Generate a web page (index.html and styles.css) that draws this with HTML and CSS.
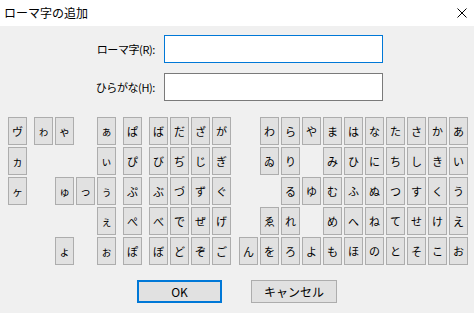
FILE: index.html
```html
<!DOCTYPE html>
<html lang="ja">
<head>
    <meta charset="UTF-8">
    <title>ローマ字の追加</title>
    <link rel="stylesheet" href="styles.css">
</head>
<body>
    <div class="titlebar">
        <span class="title">ローマ字の追加</span>
        <svg class="close" width="10" height="10" viewBox="0 0 10 10">
            <path d="M0.5 0.5 L9.5 9.5 M9.5 0.5 L0.5 9.5" stroke="#000" stroke-width="1"/>
        </svg>
    </div>

    <div class="dialog">
        <div class="form">
            <label class="label" for="romaji">ローマ字(R):</label>
            <input class="field focused" id="romaji" type="text">
            <label class="label" for="kana">ひらがな(H):</label>
            <input class="field" id="kana" type="text">
        </div>

        <div class="kana-table">
            <div class="group g1">
                <span class="key">ヴ</span>
                <span class="key">ヵ</span>
                <span class="key">ヶ</span>
                <span></span>
                <span></span>
            </div>
            <div class="group g4">
                <span class="key">ゎ</span><span class="key">ゃ</span><span></span><span class="key">ぁ</span>
                <span></span><span></span><span></span><span class="key">ぃ</span>
                <span></span><span class="key">ゅ</span><span class="key">っ</span><span class="key">ぅ</span>
                <span></span><span></span><span></span><span class="key">ぇ</span>
                <span></span><span class="key">ょ</span><span></span><span class="key">ぉ</span>
            </div>
            <div class="group g1">
                <span class="key">ぱ</span>
                <span class="key">ぴ</span>
                <span class="key">ぷ</span>
                <span class="key">ぺ</span>
                <span class="key">ぽ</span>
            </div>
            <div class="group g4">
                <span class="key">ば</span><span class="key">だ</span><span class="key">ざ</span><span class="key">が</span>
                <span class="key">び</span><span class="key">ぢ</span><span class="key">じ</span><span class="key">ぎ</span>
                <span class="key">ぶ</span><span class="key">づ</span><span class="key">ず</span><span class="key">ぐ</span>
                <span class="key">べ</span><span class="key">で</span><span class="key">ぜ</span><span class="key">げ</span>
                <span class="key">ぼ</span><span class="key">ど</span><span class="key">ぞ</span><span class="key">ご</span>
            </div>
            <div class="group g11">
                <span></span><span class="key">わ</span><span class="key">ら</span><span class="key">や</span><span class="key">ま</span><span class="key">は</span><span class="key">な</span><span class="key">た</span><span class="key">さ</span><span class="key">か</span><span class="key">あ</span>
                <span></span><span class="key">ゐ</span><span class="key">り</span><span></span><span class="key">み</span><span class="key">ひ</span><span class="key">に</span><span class="key">ち</span><span class="key">し</span><span class="key">き</span><span class="key">い</span>
                <span></span><span></span><span class="key">る</span><span class="key">ゆ</span><span class="key">む</span><span class="key">ふ</span><span class="key">ぬ</span><span class="key">つ</span><span class="key">す</span><span class="key">く</span><span class="key">う</span>
                <span></span><span class="key">ゑ</span><span class="key">れ</span><span></span><span class="key">め</span><span class="key">へ</span><span class="key">ね</span><span class="key">て</span><span class="key">せ</span><span class="key">け</span><span class="key">え</span>
                <span class="key">ん</span><span class="key">を</span><span class="key">ろ</span><span class="key">よ</span><span class="key">も</span><span class="key">ほ</span><span class="key">の</span><span class="key">と</span><span class="key">そ</span><span class="key">こ</span><span class="key">お</span>
            </div>
        </div>

        <div class="actions">
            <button class="btn default">OK</button>
            <button class="btn">キャンセル</button>
        </div>
    </div>
</body>
</html>
```

FILE: styles.css
```css
body {
    margin: 0;
    width: 474px;
    height: 313px;
    overflow: hidden;
    background-color: #f0f0f0;
    font-family: "Noto Sans CJK JP", "Noto Sans", sans-serif;
    font-size: 12px;
    color: #000;
}
.titlebar {
    height: 26px;
    background-color: #fff;
    display: flex;
    align-items: center;
    justify-content: space-between;
    padding: 0 7px 0 4px;
}
.title {
    font-size: 12px;
    line-height: 1;
}
.close {
    display: block;
}
.dialog {
    padding: 9px 0 0 8px;
}
.form {
    display: grid;
    grid-template-columns: 80px 219px;
    column-gap: 9px;
    row-gap: 10px;
    margin-left: 67px;
    align-items: center;
}
.label {
    font-size: 11px;
    white-space: nowrap;
    justify-self: end;
    letter-spacing: -0.4px;
}
.field {
    box-sizing: border-box;
    width: 219px;
    height: 28px;
    margin: 0;
    border: 1px solid #7a7a7a;
    background-color: #fff;
    outline: none;
}
.field.focused {
    border-color: #0078d7;
}
.kana-table {
    display: flex;
    gap: 7px;
    margin-top: 16px;
}
.group {
    display: grid;
    grid-template-rows: repeat(5, 28px);
    gap: 2px;
}
.g1 {
    grid-template-columns: 19px;
}
.g4 {
    grid-template-columns: repeat(4, 19px);
}
.g11 {
    grid-template-columns: repeat(11, 19px);
    margin-left: 1px;
}
.key {
    box-sizing: border-box;
    border: 1px solid #adadad;
    background-color: #e1e1e1;
    display: flex;
    align-items: center;
    justify-content: center;
    font-size: 11px;
}
.actions {
    display: flex;
    justify-content: center;
    gap: 29px;
    margin: 15px 0 0 -8px;
}
.btn {
    box-sizing: border-box;
    width: 86px;
    height: 23px;
    margin: 0;
    padding: 0;
    border: 1px solid #adadad;
    background-color: #e1e1e1;
    font-family: "Noto Sans CJK JP", "Noto Sans", sans-serif;
    font-size: 12px;
    color: #000;
}
.btn.default {
    border: 2px solid #0078d7;
    width: 85px;
}
```
